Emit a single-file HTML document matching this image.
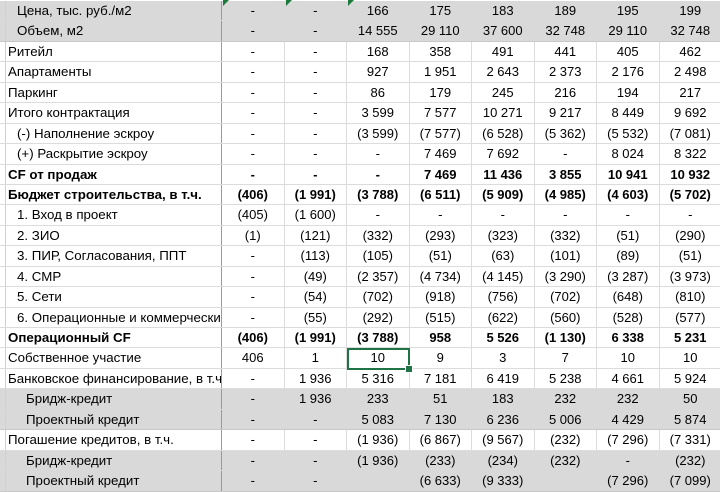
<!DOCTYPE html>
<html><head><meta charset="utf-8"><style>
*{margin:0;padding:0;box-sizing:border-box}
body{width:720px;height:480px;overflow:hidden;background:#fff;font-family:"Liberation Sans","DejaVu Sans",sans-serif;font-size:13px;color:#000;position:relative}
#g{position:absolute;top:1px;left:0;width:722px}
.r{display:flex;height:20.45px;border-bottom:1px solid #dcdcdc;line-height:19.4px;white-space:nowrap}
.r.gr{background:#d9d9d9;border-bottom-color:#d9d9d9}
.r.gr.e{border-bottom-color:#c8c8c8}
.r.b{font-weight:bold}
.l{width:222px;padding-left:2px;overflow:hidden;border-left:1px solid #d0d0d0;margin-left:5px;width:217px;border-right:1px solid #9a9a9a;font-size:13.3px}
.i1 .l{padding-left:11px}
.i2 .l{padding-left:20px}
.c{width:62.5px;text-align:center;border-right:1px solid #dcdcdc}
.gr .c{border-right-color:#d9d9d9}
.tri{position:absolute;top:0;width:0;height:0;border-top:6px solid #1e7a3c;border-right:6px solid transparent}
#sel{position:absolute;left:347px;top:348px;width:63px;height:22px;border:2px solid #217346}
#sel:after{content:"";position:absolute;right:-5px;bottom:-5px;width:6px;height:6px;background:#217346;border:1px solid #fff}
</style></head><body>
<div id="g">
<div class="r gr i1"><div class="l">Цена, тыс. руб./м2</div><div class="c">-</div><div class="c">-</div><div class="c">166</div><div class="c">175</div><div class="c">183</div><div class="c">189</div><div class="c">195</div><div class="c">199</div></div>
<div class="r gr e i1"><div class="l">Объем, м2</div><div class="c">-</div><div class="c">-</div><div class="c">14 555</div><div class="c">29 110</div><div class="c">37 600</div><div class="c">32 748</div><div class="c">29 110</div><div class="c">32 748</div></div>
<div class="r"><div class="l">Ритейл</div><div class="c">-</div><div class="c">-</div><div class="c">168</div><div class="c">358</div><div class="c">491</div><div class="c">441</div><div class="c">405</div><div class="c">462</div></div>
<div class="r"><div class="l">Апартаменты</div><div class="c">-</div><div class="c">-</div><div class="c">927</div><div class="c">1 951</div><div class="c">2 643</div><div class="c">2 373</div><div class="c">2 176</div><div class="c">2 498</div></div>
<div class="r"><div class="l">Паркинг</div><div class="c">-</div><div class="c">-</div><div class="c">86</div><div class="c">179</div><div class="c">245</div><div class="c">216</div><div class="c">194</div><div class="c">217</div></div>
<div class="r"><div class="l">Итого контрактация</div><div class="c">-</div><div class="c">-</div><div class="c">3 599</div><div class="c">7 577</div><div class="c">10 271</div><div class="c">9 217</div><div class="c">8 449</div><div class="c">9 692</div></div>
<div class="r i1"><div class="l">(-) Наполнение эскроу</div><div class="c">-</div><div class="c">-</div><div class="c">(3 599)</div><div class="c">(7 577)</div><div class="c">(6 528)</div><div class="c">(5 362)</div><div class="c">(5 532)</div><div class="c">(7 081)</div></div>
<div class="r i1"><div class="l">(+) Раскрытие эскроу</div><div class="c">-</div><div class="c">-</div><div class="c">-</div><div class="c">7 469</div><div class="c">7 692</div><div class="c">-</div><div class="c">8 024</div><div class="c">8 322</div></div>
<div class="r b"><div class="l">CF от продаж</div><div class="c">-</div><div class="c">-</div><div class="c">-</div><div class="c">7 469</div><div class="c">11 436</div><div class="c">3 855</div><div class="c">10 941</div><div class="c">10 932</div></div>
<div class="r b"><div class="l">Бюджет строительства, в т.ч.</div><div class="c">(406)</div><div class="c">(1 991)</div><div class="c">(3 788)</div><div class="c">(6 511)</div><div class="c">(5 909)</div><div class="c">(4 985)</div><div class="c">(4 603)</div><div class="c">(5 702)</div></div>
<div class="r i1"><div class="l">1. Вход в проект</div><div class="c">(405)</div><div class="c">(1 600)</div><div class="c">-</div><div class="c">-</div><div class="c">-</div><div class="c">-</div><div class="c">-</div><div class="c">-</div></div>
<div class="r i1"><div class="l">2. ЗИО</div><div class="c">(1)</div><div class="c">(121)</div><div class="c">(332)</div><div class="c">(293)</div><div class="c">(323)</div><div class="c">(332)</div><div class="c">(51)</div><div class="c">(290)</div></div>
<div class="r i1"><div class="l">3. ПИР, Согласования, ППТ</div><div class="c">-</div><div class="c">(113)</div><div class="c">(105)</div><div class="c">(51)</div><div class="c">(63)</div><div class="c">(101)</div><div class="c">(89)</div><div class="c">(51)</div></div>
<div class="r i1"><div class="l">4. СМР</div><div class="c">-</div><div class="c">(49)</div><div class="c">(2 357)</div><div class="c">(4 734)</div><div class="c">(4 145)</div><div class="c">(3 290)</div><div class="c">(3 287)</div><div class="c">(3 973)</div></div>
<div class="r i1"><div class="l">5. Сети</div><div class="c">-</div><div class="c">(54)</div><div class="c">(702)</div><div class="c">(918)</div><div class="c">(756)</div><div class="c">(702)</div><div class="c">(648)</div><div class="c">(810)</div></div>
<div class="r i1"><div class="l">6. Операционные и коммерческие</div><div class="c">-</div><div class="c">(55)</div><div class="c">(292)</div><div class="c">(515)</div><div class="c">(622)</div><div class="c">(560)</div><div class="c">(528)</div><div class="c">(577)</div></div>
<div class="r b"><div class="l">Операционный CF</div><div class="c">(406)</div><div class="c">(1 991)</div><div class="c">(3 788)</div><div class="c">958</div><div class="c">5 526</div><div class="c">(1 130)</div><div class="c">6 338</div><div class="c">5 231</div></div>
<div class="r"><div class="l">Собственное участие</div><div class="c">406</div><div class="c">1</div><div class="c">10</div><div class="c">9</div><div class="c">3</div><div class="c">7</div><div class="c">10</div><div class="c">10</div></div>
<div class="r"><div class="l">Банковское финансирование, в т.ч.</div><div class="c">-</div><div class="c">1 936</div><div class="c">5 316</div><div class="c">7 181</div><div class="c">6 419</div><div class="c">5 238</div><div class="c">4 661</div><div class="c">5 924</div></div>
<div class="r gr i2"><div class="l">Бридж-кредит</div><div class="c">-</div><div class="c">1 936</div><div class="c">233</div><div class="c">51</div><div class="c">183</div><div class="c">232</div><div class="c">232</div><div class="c">50</div></div>
<div class="r gr e i2"><div class="l">Проектный кредит</div><div class="c">-</div><div class="c">-</div><div class="c">5 083</div><div class="c">7 130</div><div class="c">6 236</div><div class="c">5 006</div><div class="c">4 429</div><div class="c">5 874</div></div>
<div class="r"><div class="l">Погашение кредитов, в т.ч.</div><div class="c">-</div><div class="c">-</div><div class="c">(1 936)</div><div class="c">(6 867)</div><div class="c">(9 567)</div><div class="c">(232)</div><div class="c">(7 296)</div><div class="c">(7 331)</div></div>
<div class="r gr i2"><div class="l">Бридж-кредит</div><div class="c">-</div><div class="c">-</div><div class="c">(1 936)</div><div class="c">(233)</div><div class="c">(234)</div><div class="c">(232)</div><div class="c">-</div><div class="c">(232)</div></div>
<div class="r gr e i2"><div class="l">Проектный кредит</div><div class="c">-</div><div class="c">-</div><div class="c"></div><div class="c">(6 633)</div><div class="c">(9 333)</div><div class="c"></div><div class="c">(7 296)</div><div class="c">(7 099)</div></div>
</div>
<div class="tri" style="left:223px"></div><div class="tri" style="left:286px"></div><div class="tri" style="left:348px"></div>
<div id="sel"></div>
</body></html>
